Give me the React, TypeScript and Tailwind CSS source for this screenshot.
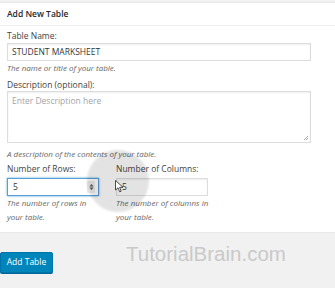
import React from 'react';

const App: React.FC = () => {
  return (
    <div className="relative h-[288px] w-[335px] overflow-hidden bg-[#f1f1f1] pt-[2px] text-[#444] font-['Open_Sans','Noto_Sans',sans-serif]">
      {/* Panel */}
      <div className="h-[231px] border-y border-[#e8e8e8] bg-white">
        <div className="flex h-[23px] items-center border-b border-[#eeeeee] px-[7px] text-[8.5px] font-semibold text-[#23282d]">
          Add New Table
        </div>

        <div className="px-[7px] pt-[4px]">
          <label className="block h-[12px] text-[8.5px] leading-[12px] text-[#444]">Table Name:</label>
          <div className="mt-[1px] flex h-[18px] w-[304px] items-center border border-[#dddddd] px-[4px] text-[8.5px] text-[#32373c] shadow-[inset_0_1px_2px_rgba(0,0,0,0.07)]">
            STUDENT MARKSHEET
          </div>
          <p className="mt-[1px] h-[12px] text-[8px] italic leading-[12px] text-[#666]">
            The name or title of your table.
          </p>

          <label className="mt-[5px] block h-[12px] text-[8.5px] leading-[12px] text-[#444]">
            Description (optional):
          </label>
          <div className="relative h-[52px] w-[304px] border border-[#dddddd] px-[4px] pt-[3px] text-[8.5px] text-[#a0a5aa] shadow-[inset_0_1px_2px_rgba(0,0,0,0.07)]">
            Enter Description here
            <svg className="absolute bottom-[1px] right-[1px]" width="6" height="6" viewBox="0 0 6 6">
              <path d="M5 1 L1 5 M5 3 L3 5" stroke="#999" strokeWidth="0.8" />
            </svg>
          </div>
          <p className="mt-[5px] h-[12px] text-[8px] italic leading-[12px] text-[#666]">
            A description of the contents of your table.
          </p>

          <div className="mt-[3px] flex gap-[17px]">
            <div className="w-[92px]">
              <label className="block h-[12px] text-[8.5px] leading-[12px] text-[#444]">Number of Rows:</label>
              <div className="mt-[3px] flex h-[18px] w-[92px] items-center justify-between border border-[#5b9dd9] pl-[5px] pr-[3px] text-[8.5px] text-[#32373c] shadow-[0_0_2px_rgba(30,140,190,0.8)]">
                <span>5</span>
                <span className="flex h-[12px] w-[8px] flex-col items-center justify-center rounded-[1px] bg-[#ececec]">
                  <svg width="5" height="8" viewBox="0 0 5 8">
                    <path d="M2.5 1 L4.5 3.5 L0.5 3.5 Z M2.5 7 L4.5 4.5 L0.5 4.5 Z" fill="#555" />
                  </svg>
                </span>
              </div>
              <p className="text-[8px] italic leading-[14px] text-[#666]">
                The number of rows in your table.
              </p>
            </div>
            <div className="w-[100px]">
              <label className="block h-[12px] text-[8.5px] leading-[12px] text-[#444]">Number of Columns:</label>
              <div className="mt-[3px] flex h-[18px] w-[92px] items-center border border-[#dddddd] pl-[5px] text-[8.5px] text-[#32373c] shadow-[inset_0_1px_2px_rgba(0,0,0,0.07)]">
                5
              </div>
              <p className="text-[8px] italic leading-[14px] text-[#666]">
                The number of columns in your table.
              </p>
            </div>
          </div>
        </div>
      </div>

      {/* Submit */}
      <div className="mt-[19px] flex items-center">
        <button className="h-[21px] w-[53px] rounded-[2px] border border-[#0073aa] bg-[#0085ba] text-[8.5px] text-white shadow-[0_1px_0_#006799]">
          Add Table
        </button>
        <span
          className="ml-[73px] -mt-[17px] text-[20.5px] leading-none text-[#c9c9c9]"
          style={{ fontFamily: '"Liberation Sans", Arial, sans-serif' }}
        >
          TutorialBrain.com
        </span>
      </div>

      {/* Cursor highlight overlay */}
      <div className="pointer-events-none absolute left-[87px] top-[150px] h-[62px] w-[62px] rounded-full bg-black/[0.11] blur-[1px]" />
      <svg className="pointer-events-none absolute left-[115px] top-[180px]" width="9" height="13" viewBox="0 0 9 13">
        <path d="M0.5 0.5 L0.5 10 L3 7.8 L4.7 11.8 L6.2 11.2 L4.6 7.3 L8 7.3 Z" fill="#fff" stroke="#222" strokeWidth="0.8" />
      </svg>
    </div>
  );
};

export default App;
